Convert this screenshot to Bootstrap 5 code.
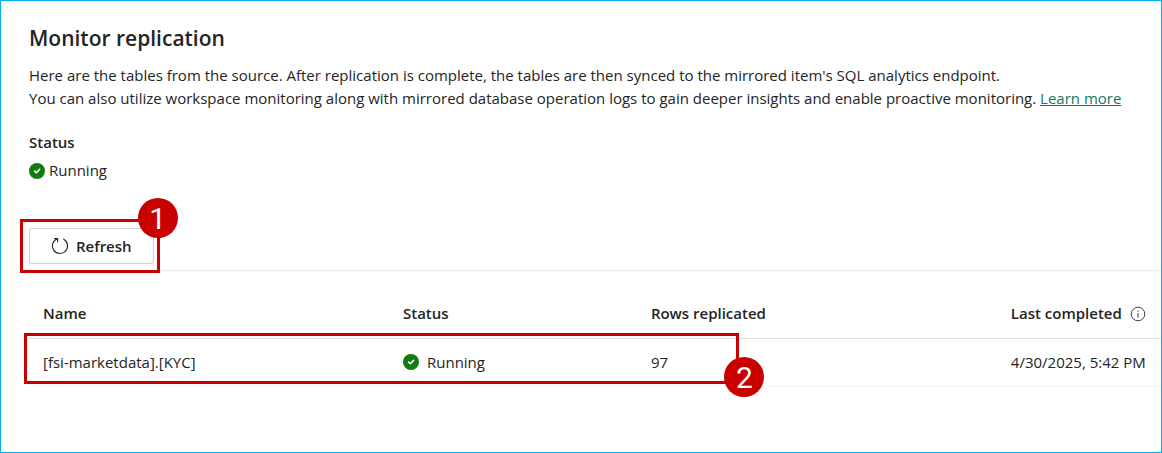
<!DOCTYPE html>
<html lang="en">
<head>
<meta charset="utf-8">
<meta name="viewport" content="width=device-width, initial-scale=1">
<title>Monitor replication</title>
<link href="https://cdn.jsdelivr.net/npm/bootstrap@5.3.0/dist/css/bootstrap.min.css" rel="stylesheet">
<style>
  :root { --ink: #242424; --callout: #c80000; }
  body { font-family: "Open Sans", "Noto Sans", sans-serif; font-size: 15px; line-height: 23px; color: var(--ink); background: #fff; }
  .panel { min-height: 100vh; border: 1px solid #00adef; padding: 23px 0 24px 28px; }
  .panel-title { font-size: 21px; line-height: 28px; font-weight: 600; margin-bottom: 12px; }
  .status-block { margin-top: 21px; gap: 5px; }
  .semi { font-weight: 600; }
  .learn { color: #117865; }
  .toolbar { margin-top: 46px; padding-bottom: 6px; border-bottom: 1px solid #ebebeb; }
  .refresh { --bs-btn-color: #242424; --bs-btn-border-color: #d1d1d1; --bs-btn-bg: #fff; --bs-btn-hover-color: #242424; --bs-btn-hover-bg: #f5f5f5; --bs-btn-hover-border-color: #c7c7c7;
    --bs-btn-font-size: 15px; --bs-btn-font-weight: 600; --bs-btn-line-height: 22px; --bs-btn-border-radius: 2px; --bs-btn-padding-x: 21px; --bs-btn-padding-y: 6px; gap: 7px; }
  .callout { border: 3px solid var(--callout); pointer-events: none; }
  .callout-refresh { inset: -9px -6px -9px -9px; }
  .callout-row { left: -5px; width: 63.2%; bottom: 3px; height: 51px; }
  .step { width: 40px; height: 40px; border-radius: 50%; background: var(--callout); color: #fff; font: 30px/42px Roboto, "Liberation Sans", sans-serif; text-align: center; }
  .callout-refresh .step { top: -24px; right: -21px; }
  .callout-row .step { bottom: -16px; right: -28px; }
  .replication { table-layout: fixed; margin: 19px 0 0; color: var(--ink); --bs-table-color: #242424; --bs-table-bg: transparent; }
  .replication > :not(caption) > * > * { height: 48px; padding: 0 14px; border-bottom: 1px solid #f3f3f3; white-space: nowrap; vertical-align: middle; }
  .replication > thead > tr > th { font-weight: 600; border-bottom-color: #e0e0e0; }
  .col-name, .col-rows { width: 31.8%; }
  .col-status { width: 21.9%; }
</style>
</head>
<body>
<svg class="d-none" xmlns="http://www.w3.org/2000/svg">
  <symbol id="ok" viewBox="0 0 16 16"><circle cx="8" cy="8" r="8" fill="#107c10"/><path d="M5.6 8.1l1.7 1.7 3.3-3.4" fill="none" stroke="#fff" stroke-width="1.6" stroke-linecap="round" stroke-linejoin="round"/></symbol>
</svg>
<main class="panel">
  <h1 class="panel-title">Monitor replication</h1>
  <p class="mb-0">Here are the tables from the source. After replication is complete, the tables are then synced to the mirrored item's SQL analytics endpoint.<br>
  You can also utilize workspace monitoring along with mirrored database operation logs to gain deeper insights and enable proactive monitoring. <a class="learn" href="#">Learn more</a></p>

  <div class="status-block d-flex flex-column">
    <div class="semi">Status</div>
    <div class="d-flex align-items-center gap-1"><svg width="16" height="16" aria-hidden="true"><use href="#ok"/></svg>Running</div>
  </div>

  <div class="toolbar d-flex">
    <div class="position-relative">
      <button type="button" class="btn refresh d-flex align-items-center">
        <svg width="18" height="18" viewBox="0 0 18 18" fill="none" stroke="currentColor" stroke-width="1.1" aria-hidden="true"><path d="M12.3 2.1A7.6 7.6 0 1 1 6 1.9M3 1.6h3.6v3.7"/></svg>
        Refresh
      </button>
      <div class="callout callout-refresh position-absolute"><div class="step position-absolute">1</div></div>
    </div>
  </div>

  <div class="position-relative">
    <table class="table replication">
      <thead>
        <tr>
          <th scope="col" class="col-name">Name</th>
          <th scope="col" class="col-status">Status</th>
          <th scope="col" class="col-rows">Rows replicated</th>
          <th scope="col"><span class="d-flex align-items-center">Last completed
            <svg class="ms-2" width="16" height="16" viewBox="0 0 16 16" fill="none" stroke="#424242" aria-hidden="true"><circle cx="8" cy="8" r="6.8"/><path d="M8 7v4.5M8 4.4v1.3" stroke-width="1.1"/></svg></span></th>
        </tr>
      </thead>
      <tbody>
        <tr>
          <td>[fsi-marketdata].[KYC]</td>
          <td><span class="d-flex align-items-center gap-2"><svg width="16" height="16" aria-hidden="true"><use href="#ok"/></svg>Running</span></td>
          <td>97</td>
          <td>4/30/2025, 5:42 PM</td>
        </tr>
      </tbody>
    </table>
    <div class="callout callout-row position-absolute"><div class="step position-absolute">2</div></div>
  </div>
</main>
<script src="https://cdn.jsdelivr.net/npm/bootstrap@5.3.0/dist/js/bootstrap.bundle.min.js"></script>
</body>
</html>
